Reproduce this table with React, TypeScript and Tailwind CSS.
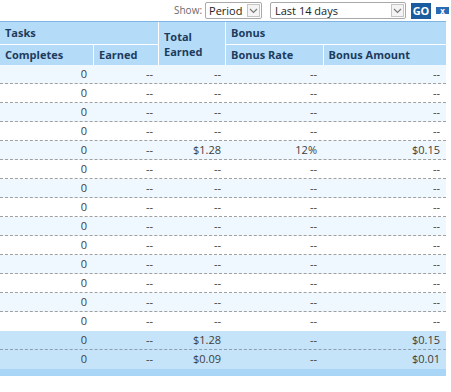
import React from "react";

interface Row {
  completes: string;
  earned: string;
  total: string;
  rate: string;
  amount: string;
}

const blank: Row = { completes: "0", earned: "--", total: "--", rate: "--", amount: "--" };

const rows: Row[] = [
  blank,
  blank,
  blank,
  blank,
  { completes: "0", earned: "--", total: "$1.28", rate: "12%", amount: "$0.15" },
  blank,
  blank,
  blank,
  blank,
  blank,
  blank,
  blank,
  blank,
  blank,
];

const totals: Row[] = [
  { completes: "0", earned: "--", total: "$1.28", rate: "--", amount: "$0.15" },
  { completes: "0", earned: "--", total: "$0.09", rate: "--", amount: "$0.01" },
];

const Chevron = () => (
  <svg width="9" height="6" viewBox="0 0 9 6" fill="none">
    <path d="M1 1l3.5 3.5L8 1" stroke="#7a7a7a" strokeWidth="1.2" />
  </svg>
);

const Cells = ({ row }: { row: Row }) => (
  <>
    <div className="w-[93px] pr-[6px] text-right">{row.completes}</div>
    <div className="w-[65px] pr-[5px] text-right">{row.earned}</div>
    <div className="w-[67px] pr-[4px] text-right">{row.total}</div>
    <div className="w-[97px] pr-[5px] text-right">{row.rate}</div>
    <div className="w-[124px] pr-[6px] text-right">{row.amount}</div>
  </>
);

export default function App() {
  return (
    <div className="w-[451px] h-[392px] bg-white font-['Open_Sans',sans-serif] text-[11px] text-[#3c3c3c]">
      {/* toolbar */}
      <div className="flex h-[21px] items-center pl-[174px]">
        <span className="text-[#6b6b6b] text-[10px]">Show:</span>
        <div className="ml-[3px] flex h-[17px] w-[57px] items-center justify-between rounded-[2px] border border-[#a9a9a9] pl-[3px] pr-[1px]">
          <span className="text-[11px] text-[#222] leading-none">Period</span>
          <span className="flex h-[13px] w-[13px] items-center justify-center border border-[#c4c4c4] bg-[#f4f4f4]">
            <Chevron />
          </span>
        </div>
        <div className="ml-[8px] flex h-[17px] w-[136px] items-center justify-between rounded-[2px] border border-[#a9a9a9] pl-[4px] pr-[1px]">
          <span className="text-[11px] text-[#222] leading-none">Last 14 days</span>
          <span className="flex h-[13px] w-[13px] items-center justify-center border border-[#c4c4c4] bg-[#f4f4f4]">
            <Chevron />
          </span>
        </div>
        <div className="ml-[5px] flex h-[16px] w-[20px] items-center justify-center bg-[#1b5c9f] text-[11px] font-bold text-white leading-none">
          GO
        </div>
        <div className="ml-[5px] flex h-[7px] w-[13px] items-center justify-center bg-[#2a6bb5] text-[8px] font-bold text-white leading-none">
          x
        </div>
      </div>

      {/* table */}
      <div className="w-[446px]">
        <div className="flex border-t border-[#7db6e4] bg-[#b4dcf8] font-bold text-[#1d3b5e]">
          <div className="flex w-[158px] flex-col">
            <div className="flex h-[23px] items-center border-b border-white pl-[5px]">Tasks</div>
            <div className="flex h-[20px]">
              <div className="flex w-[93px] items-center pl-[5px]">Completes</div>
              <div className="flex w-[65px] items-center border-l border-white pl-[5px]">Earned</div>
            </div>
          </div>
          <div className="flex w-[67px] flex-col justify-center border-l border-white pl-[5px] leading-[15px]">
            <span>Total</span>
            <span>Earned</span>
          </div>
          <div className="flex w-[221px] flex-col border-l border-white">
            <div className="flex h-[23px] items-center border-b border-white pl-[5px]">Bonus</div>
            <div className="flex h-[20px]">
              <div className="flex w-[97px] items-center pl-[5px]">Bonus Rate</div>
              <div className="flex w-[124px] items-center border-l border-white pl-[5px]">Bonus Amount</div>
            </div>
          </div>
        </div>

        {rows.map((row, index) => (
          <div
            key={index}
            className={`flex h-[19px] items-center ${index === rows.length - 1 ? "" : "border-b border-dashed border-[#a0a0a0]"} ${index % 2 === 0 ? "bg-[#eff8fe]" : "bg-white"}`}
          >
            <Cells row={row} />
          </div>
        ))}

        {totals.map((row, index) => (
          <div
            key={index}
            className={`flex h-[19px] items-center bg-[#c6e4f9] ${index === 0 ? "border-b border-dashed border-[#8a9fb0]" : ""}`}
          >
            <Cells row={row} />
          </div>
        ))}
        <div className="h-[7px] bg-[#a9d5f6]" />
      </div>
    </div>
  );
}
